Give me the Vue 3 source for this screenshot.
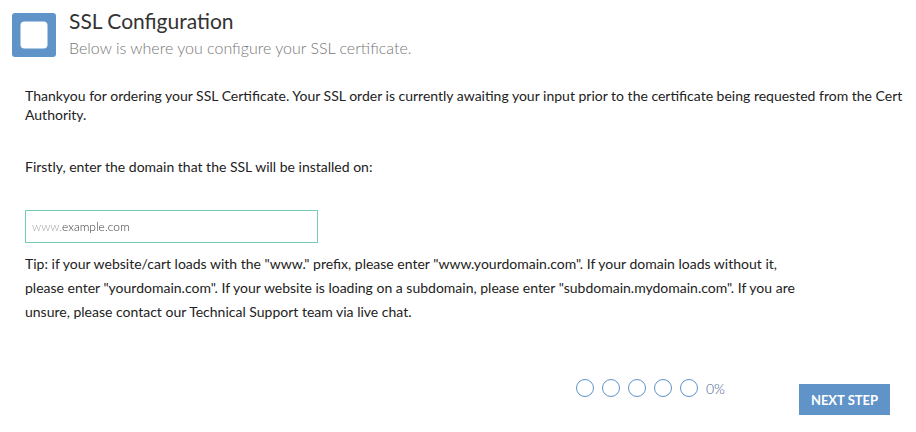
<script setup>
import { ref } from 'vue'

const domain = ref('')
const steps = 5
</script>

<template>
  <main class="page">
    <header class="head">
      <svg class="logo" viewBox="0 0 44 44" aria-hidden="true">
        <rect width="44" height="44" rx="3" fill="#6093c8" />
        <rect x="8.5" y="8.5" width="27" height="27" rx="4" fill="#fff" />
      </svg>
      <div>
        <h1>SSL Configuration</h1>
        <p class="sub">Below is where you configure your SSL certificate.</p>
      </div>
    </header>
    <form class="body" @submit.prevent>
      <p class="intro">Thankyou for ordering your SSL Certificate. Your SSL order is currently awaiting your input prior to the certificate being requested from the Cert Authority.</p>
      <label class="prompt" for="domain">Firstly, enter the domain that the SSL will be installed on:</label>
      <input id="domain" v-model="domain" class="domain" type="text" placeholder="www.example.com" />
      <p class="tip">Tip: if your website/cart loads with the "www." prefix, please enter "www.yourdomain.com". If your domain loads without it, please enter "yourdomain.com". If your website is loading on a subdomain, please enter "subdomain.mydomain.com". If you are unsure, please contact our Technical Support team via live chat.</p>
      <footer class="foot">
        <div class="progress">
          <span v-for="n in steps" :key="n" class="dot"></span>
          <span class="percent">0%</span>
        </div>
        <button class="next" type="submit">NEXT STEP</button>
      </footer>
    </form>
  </main>
</template>

<style>
body { background: #fff; }
</style>

<style scoped>
.page { font-family: Lato, "Liberation Sans", sans-serif; color: #222; font-size: 14px; padding: 7px 12px 16px; }
.head { display: flex; gap: 13px; }
.logo { width: 44px; height: 44px; margin-top: 6px; }
h1 { margin: 0; font-size: 21px; line-height: 28px; font-weight: 400; color: #333; }
.sub { margin: 0; font-size: 16px; line-height: 26px; font-weight: 300; color: #777; }
.body { padding: 0 0 0 13px; }
.intro { margin: 25px 0 0; line-height: 19px; }
.prompt { display: block; margin-top: 33px; line-height: 20px; }
.domain { display: block; box-sizing: border-box; width: 293px; height: 33px; margin-top: 33px; padding: 0 6px; border: 1px solid #74cbb8; background: #fff; font: 300 12px Lato, sans-serif; color: #333; }
.domain::placeholder { color: transparent; opacity: 1; background: linear-gradient(90deg, #999 29px, #333 29px); background-clip: text; -webkit-background-clip: text; }
.tip { margin: 9px 0 0; max-width: 780px; line-height: 24px; }
.foot { display: flex; justify-content: flex-end; gap: 74px; margin: 55px 14px 0 0; }
.progress { display: flex; gap: 8px; height: 18px; align-items: center; }
.dot { box-sizing: border-box; width: 18px; height: 18px; border: 1px solid #6093c8; border-radius: 50%; }
.percent { font-weight: 300; color: #46618f; }
.next { width: 91px; height: 31px; margin-top: 5px; padding: 0; border: 0; background: #6093c8; color: #fff; font: 700 13px Lato, sans-serif; }
</style>
